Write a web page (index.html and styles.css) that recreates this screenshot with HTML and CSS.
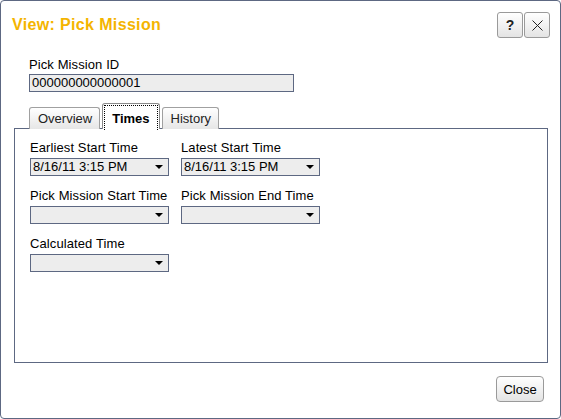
FILE: index.html
```html
<!DOCTYPE html>
<html>
<head>
<meta charset="utf-8">
<link rel="stylesheet" href="styles.css">
</head>
<body>
<div class="dialog">
  <div class="header">
    <h1 class="title">View: Pick Mission</h1>
    <div class="tools">
      <button class="tool">?</button>
      <button class="tool"><svg width="11" height="11" viewBox="0 0 11 11"><path d="M0.5 0.5L10.5 10.5M10.5 0.5L0.5 10.5" stroke="#222" stroke-width="1" fill="none"/></svg></button>
    </div>
  </div>
  <div class="body">
    <div class="field id-field">
      <div class="label">Pick Mission ID</div>
      <div class="input wide">000000000000001</div>
    </div>
    <div class="tabs">
      <div class="tab">Overview</div>
      <div class="tab active"><span class="focus">Times</span></div>
      <div class="tab">History</div>
    </div>
    <div class="panel">
      <div class="grid">
        <div class="field">
          <div class="label">Earliest Start Time</div>
          <div class="select"><span>8/16/11 3:15 PM</span><i class="arrow"></i></div>
        </div>
        <div class="field">
          <div class="label">Latest Start Time</div>
          <div class="select"><span>8/16/11 3:15 PM</span><i class="arrow"></i></div>
        </div>
        <div class="field">
          <div class="label">Pick Mission Start Time</div>
          <div class="select"><span></span><i class="arrow"></i></div>
        </div>
        <div class="field">
          <div class="label">Pick Mission End Time</div>
          <div class="select"><span></span><i class="arrow"></i></div>
        </div>
        <div class="field">
          <div class="label">Calculated Time</div>
          <div class="select"><span></span><i class="arrow"></i></div>
        </div>
      </div>
    </div>
  </div>
  <div class="footer">
    <button class="btn">Close</button>
  </div>
</div>
</body>
</html>
```
FILE: styles.css
```css
* { box-sizing: border-box; }
html, body { margin: 0; padding: 0; background: #fff; }
body { font-family: "Liberation Sans", Arial, sans-serif; font-size: 13px; color: #000; }

.dialog {
  width: 561px;
  height: 419px;
  border: 1px solid #5d6882;
  border-radius: 4px;
  display: flex;
  flex-direction: column;
  background: #fff;
}

.header {
  display: flex;
  justify-content: space-between;
  align-items: center;
  padding: 11px 10px 0 11px;
}
.title {
  margin: 0;
  font-size: 16px;
  letter-spacing: 0.35px;
  font-weight: bold;
  color: #f4b400;
  line-height: 26px;
}
.tools { display: flex; gap: 1px; }
.tool {
  width: 26px;
  height: 26px;
  padding: 0;
  border: 1px solid #9a9a9a;
  border-radius: 3px;
  background: linear-gradient(#ffffff, #e4e4e4);
  font-family: "Liberation Sans", Arial, sans-serif;
  font-size: 14px;
  font-weight: bold;
  color: #222;
  display: flex;
  align-items: center;
  justify-content: center;
}

.body { padding: 19px 12px 0 13px; }

.label { line-height: 15px; height: 15px; white-space: nowrap; letter-spacing: 0.1px; }
.input, .select {
  height: 18px;
  border: 1px solid #5d6882;
  background: #ededed;
  line-height: 16px;
  padding: 0 2px;
}
.id-field { padding-left: 15px; }
.id-field .label { margin-bottom: 2px; }
.input.wide { width: 265px; }

.tabs {
  display: flex;
  align-items: flex-end;
  gap: 2px;
  margin: 11px 0 -1px 15px;
  position: relative;
  z-index: 1;
}
.tab {
  height: 22px;
  border: 1px solid #a0a0a0;
  border-bottom: none;
  border-radius: 3px 3px 0 0;
  background: linear-gradient(#ffffff, #e6e6e6);
  padding: 0 7px 0 8px;
  line-height: 22px;
  color: #222;
}
.tab.active {
  height: 26px;
  background: #fff;
  border-color: #8a8a8a;
  font-weight: bold;
  color: #000;
  padding: 1px 1px 0;
  line-height: 22px;
}
.tab.active .focus {
  display: block;
  height: 25px;
  padding: 2px 7px 0;
  line-height: 21px;
  border-left: 1px dotted #000;
  border-right: 1px dotted #000;
  border-top: 1px dotted #000;
}

.panel {
  height: 235px;
  border: 1px solid #5d6882;
  padding: 11px 15px;
}
.grid {
  display: grid;
  grid-template-columns: 139px 139px;
  column-gap: 12px;
  row-gap: 12px;
}
.field .select { margin-top: 3px; }
.select {
  display: flex;
  align-items: center;
  justify-content: space-between;
  padding-right: 5px;
}
.arrow {
  width: 0;
  height: 0;
  border-left: 4px solid transparent;
  border-right: 4px solid transparent;
  border-top: 4px solid #000;
}

.footer {
  display: flex;
  justify-content: flex-end;
  padding: 13px 16px 0 0;
}
.btn {
  width: 48px;
  height: 26px;
  padding: 0;
  border: 1px solid #9a9a9a;
  border-radius: 4px;
  background: linear-gradient(#ffffff, #e4e4e4);
  font-family: "Liberation Sans", Arial, sans-serif;
  font-size: 13px;
  color: #000;
}
```
